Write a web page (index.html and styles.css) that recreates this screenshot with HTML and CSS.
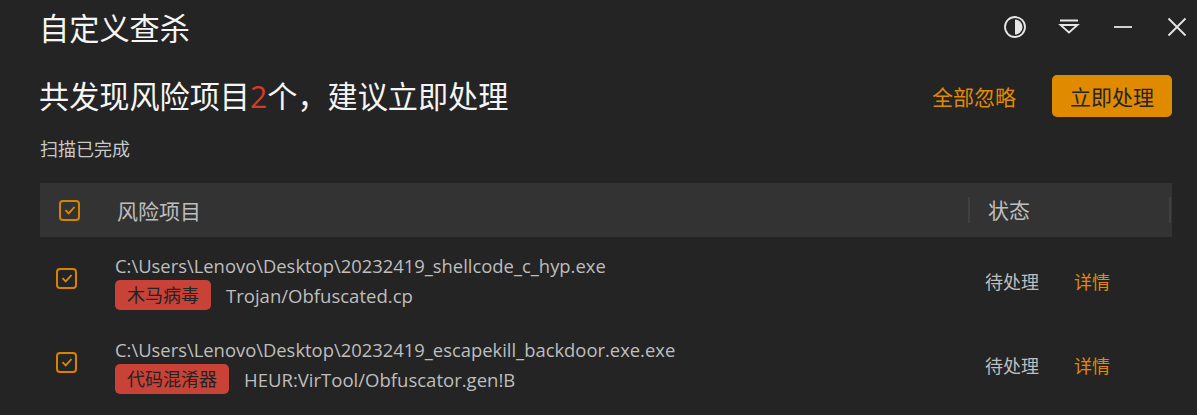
FILE: index.html
```html
<!DOCTYPE html>
<html lang="zh-CN">
<head>
  <meta charset="utf-8">
  <meta name="viewport" content="width=device-width, initial-scale=1">
  <link rel="stylesheet" href="styles.css">
  <title>自定义查杀</title>
</head>
<body>
  <!-- Title bar -->
  <div class="titlebar">
    <div class="title">自定义查杀</div>
    <div class="win_btns">
      <svg class="win_icon" viewBox="0 0 24 24"><circle cx="12" cy="12" r="10" fill="none" stroke="#e6e6e6" stroke-width="1.8"/><path d="M12 4.5a7.5 7.5 0 0 1 0 15z" fill="#e6e6e6"/></svg>
      <svg class="win_icon" viewBox="0 0 24 24"><path d="M3 5.5h18M3.500 10h17l-8.500 7.500z" fill="none" stroke="#e6e6e6" stroke-width="1.800"/></svg>
      <svg class="win_icon" viewBox="0 0 24 24"><path d="M3 12h18" fill="none" stroke="#e6e6e6" stroke-width="1.800"/></svg>
      <svg class="win_icon" viewBox="0 0 24 24"><path d="M3.500 3.500l17 17M20.500 3.500l-17 17" fill="none" stroke="#e6e6e6" stroke-width="1.800"/></svg>
    </div>
  </div>

  <!-- Summary -->
  <div class="summary">
    <div class="headline">共发现风险项目<span class="count">2</span>个，建议立即处理</div>
    <div class="actions">
      <a class="ignore_all">全部忽略</a>
      <button class="fix_btn">立即处理</button>
    </div>
  </div>
  <div class="scan_state">扫描已完成</div>

  <!-- Risk table -->
  <div class="table">
    <div class="table_head">
      <div class="head_check"><span class="check"><svg viewBox="0 0 14 14"><path d="M2.500 7.200l3.200 3.200 5.800-6.400" fill="none" stroke="#e08a00" stroke-width="1.800"/></svg></span></div>
      <div class="head_name">风险项目</div>
      <div class="head_state">状态</div>
    </div>

    <div class="row">
      <div class="row_check"><span class="check"><svg viewBox="0 0 14 14"><path d="M2.500 7.200l3.200 3.200 5.800-6.400" fill="none" stroke="#e08a00" stroke-width="1.800"/></svg></span></div>
      <div class="row_info">
        <div class="path">C:\Users\Lenovo\Desktop\20232419_shellcode_c_hyp.exe</div>
        <div class="threat"><span class="tag">木马病毒</span><span class="threat_name">Trojan/Obfuscated.cp</span></div>
      </div>
      <div class="row_state">待处理</div>
      <a class="detail">详情</a>
    </div>

    <div class="row">
      <div class="row_check"><span class="check"><svg viewBox="0 0 14 14"><path d="M2.500 7.200l3.200 3.200 5.800-6.400" fill="none" stroke="#e08a00" stroke-width="1.800"/></svg></span></div>
      <div class="row_info">
        <div class="path">C:\Users\Lenovo\Desktop\20232419_escapekill_backdoor.exe.exe</div>
        <div class="threat"><span class="tag">代码混淆器</span><span class="threat_name">HEUR:VirTool/Obfuscator.gen!B</span></div>
      </div>
      <div class="row_state">待处理</div>
      <a class="detail">详情</a>
    </div>
  </div>
</body>
</html>
```

FILE: styles.css
```css
html, body {
  height: 100%;
}

body {
  margin: 0px;
  background-color: rgb(36, 36, 36);
  color: rgb(190, 190, 190);
  font-family: "Open Sans", "Noto Sans CJK SC", sans-serif;
  overflow: hidden;
}

.titlebar {
  display: flex;
  justify-content: space-between;
  align-items: center;
  height: 56px;
  box-sizing: border-box;
  padding-left: 39px;
  padding-right: 8px;
  padding-bottom: 2px;
}

.title {
  font-size: 30.2px;
  line-height: 54px;
  color: rgb(245, 245, 245);
  font-family: "Noto Sans CJK SC", sans-serif;
}

.win_btns {
  display: flex;
  align-items: center;
  gap: 30px;
}

.win_icon {
  width: 24px;
  height: 24px;
  display: block;
}

.summary {
  display: flex;
  justify-content: space-between;
  align-items: center;
  height: 40px;
  margin-top: 21px;
  padding-left: 39px;
  padding-right: 25px;
}

.headline {
  font-size: 30.15px;
  line-height: 40px;
  color: rgb(245, 245, 245);
}

.count {
  color: rgb(214, 58, 36);
}

.actions {
  display: flex;
  align-items: center;
  gap: 36px;
  margin-bottom: 3px;
}

.ignore_all {
  font-size: 21px;
  color: rgb(224, 138, 0);
}

.fix_btn {
  width: 120px;
  height: 42px;
  border: 0;
  border-radius: 5px;
  background-color: rgb(224, 138, 0);
  color: rgb(36, 36, 36);
  font-family: inherit;
  font-size: 21px;
  padding: 0;
}

.scan_state {
  margin-top: 20px;
  padding-left: 40px;
  font-size: 18px;
  line-height: 24px;
  color: rgb(200, 200, 200);
}

.table {
  margin: 22px 25px 0 40px;
}

.table_head {
  display: flex;
  align-items: center;
  height: 54px;
  background-color: rgb(51, 51, 51);
  font-size: 21px;
}

.head_check {
  width: 77px;
  padding-left: 19px;
  box-sizing: border-box;
}

.head_name {
  flex: 1;
}

.head_state {
  width: 203px;
  height: 26px;
  margin-right: 1px;
  line-height: 26px;
  padding-left: 18px;
  box-sizing: border-box;
  border-left: 2px solid rgb(64, 64, 64);
  border-right: 2px solid rgb(64, 64, 64);
}

.check {
  display: flex;
  align-items: center;
  justify-content: center;
  width: 21px;
  height: 21px;
  box-sizing: border-box;
  border: 2px solid rgb(214, 132, 0);
  border-radius: 4px;
}

.check svg {
  width: 14px;
  height: 14px;
}

.row {
  display: flex;
  align-items: center;
  height: 84px;
}

.table_head + .row {
  margin-top: 2px;
}

.row_check {
  width: 75px;
  padding-left: 16px;
  margin-bottom: 6px;
  box-sizing: border-box;
}

.row_info {
  flex: 1;
}

.path {
  font-size: 18.4px;
  line-height: 28px;
}

.threat {
  display: flex;
  align-items: center;
  font-size: 18px;
}

.tag {
  height: 30px;
  line-height: 30px;
  padding: 0 12px;
  border-radius: 5px;
  background-color: rgb(200, 66, 56);
  color: rgb(36, 36, 36);
}

.threat_name {
  margin-left: 15px;
  font-size: 18.55px;
}

.row_state {
  width: 89px;
  font-size: 18px;
}

.detail {
  width: 98px;
  font-size: 18px;
  color: rgb(224, 138, 0);
}
```
